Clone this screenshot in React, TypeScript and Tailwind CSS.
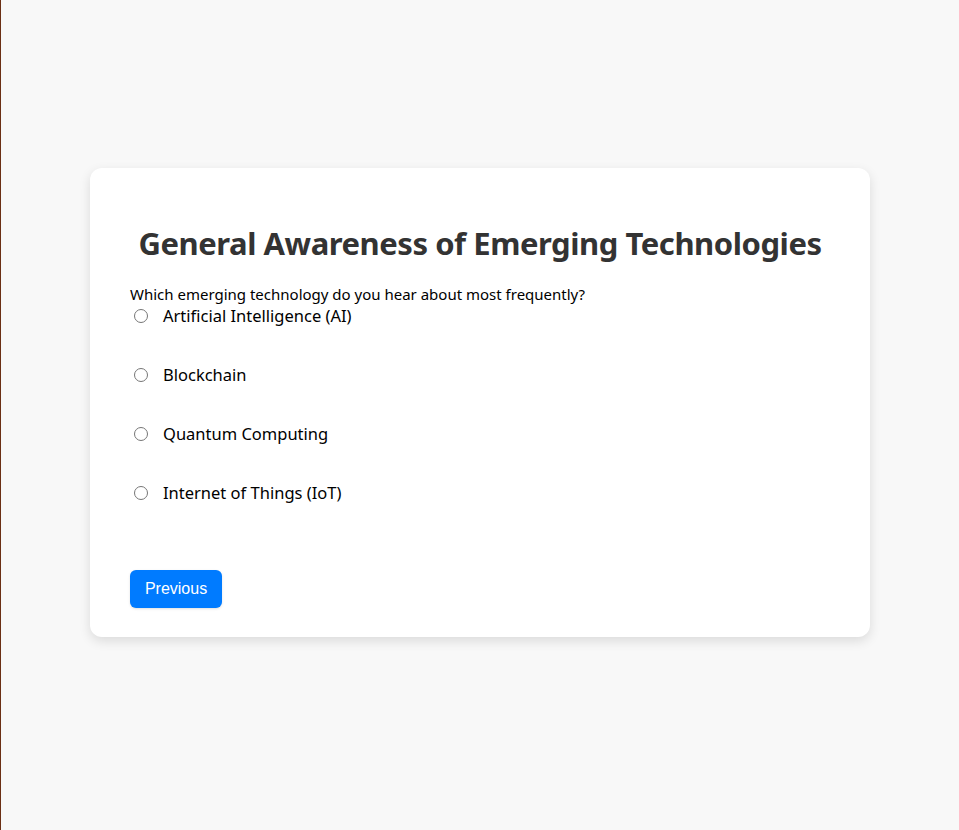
import React from "react";

const options = [
  "Artificial Intelligence (AI)",
  "Blockchain",
  "Quantum Computing",
  "Internet of Things (IoT)",
];

export default function App() {
  return (
    <div className="min-h-screen bg-[#f8f8f8] border-l border-[#6b2f14]" style={{ fontFamily: '"Noto Sans", sans-serif' }}>
      <div className="pt-[168px]">
        <div className="mx-auto w-[780px] rounded-[12px] bg-white shadow-[0_4px_12px_rgba(0,0,0,0.12)] px-10 pt-[55px] pb-[29px]">
          <h1 className="whitespace-nowrap text-center text-[31px] font-bold leading-[40px] tracking-[-0.45px] text-[#333333]">
            General Awareness of Emerging Technologies
          </h1>
          <div className="mt-[21px] text-[15px] leading-[20px] text-black">
            Which emerging technology do you hear about most frequently?
          </div>
          <div className="flex flex-col pt-[1px]">
            {options.map((o) => (
              <label key={o} className="flex h-[59px] items-start text-[16.5px] leading-[22px] text-black">
                <input type="radio" name="q" className="mt-[4px] ml-[4px] mr-[3px] h-[14px] w-[14px]" />
                <span className="ml-[12px]">{o}</span>
              </label>
            ))}
          </div>
          <div className="mt-[29px]">
            <button
              className="h-[38px] w-[92px] rounded-[6px] bg-[#007bff] text-[16px] text-white shadow-sm"
              style={{ fontFamily: '"Liberation Sans", Arial, sans-serif' }}
            >
              Previous
            </button>
          </div>
        </div>
      </div>
    </div>
  );
}
